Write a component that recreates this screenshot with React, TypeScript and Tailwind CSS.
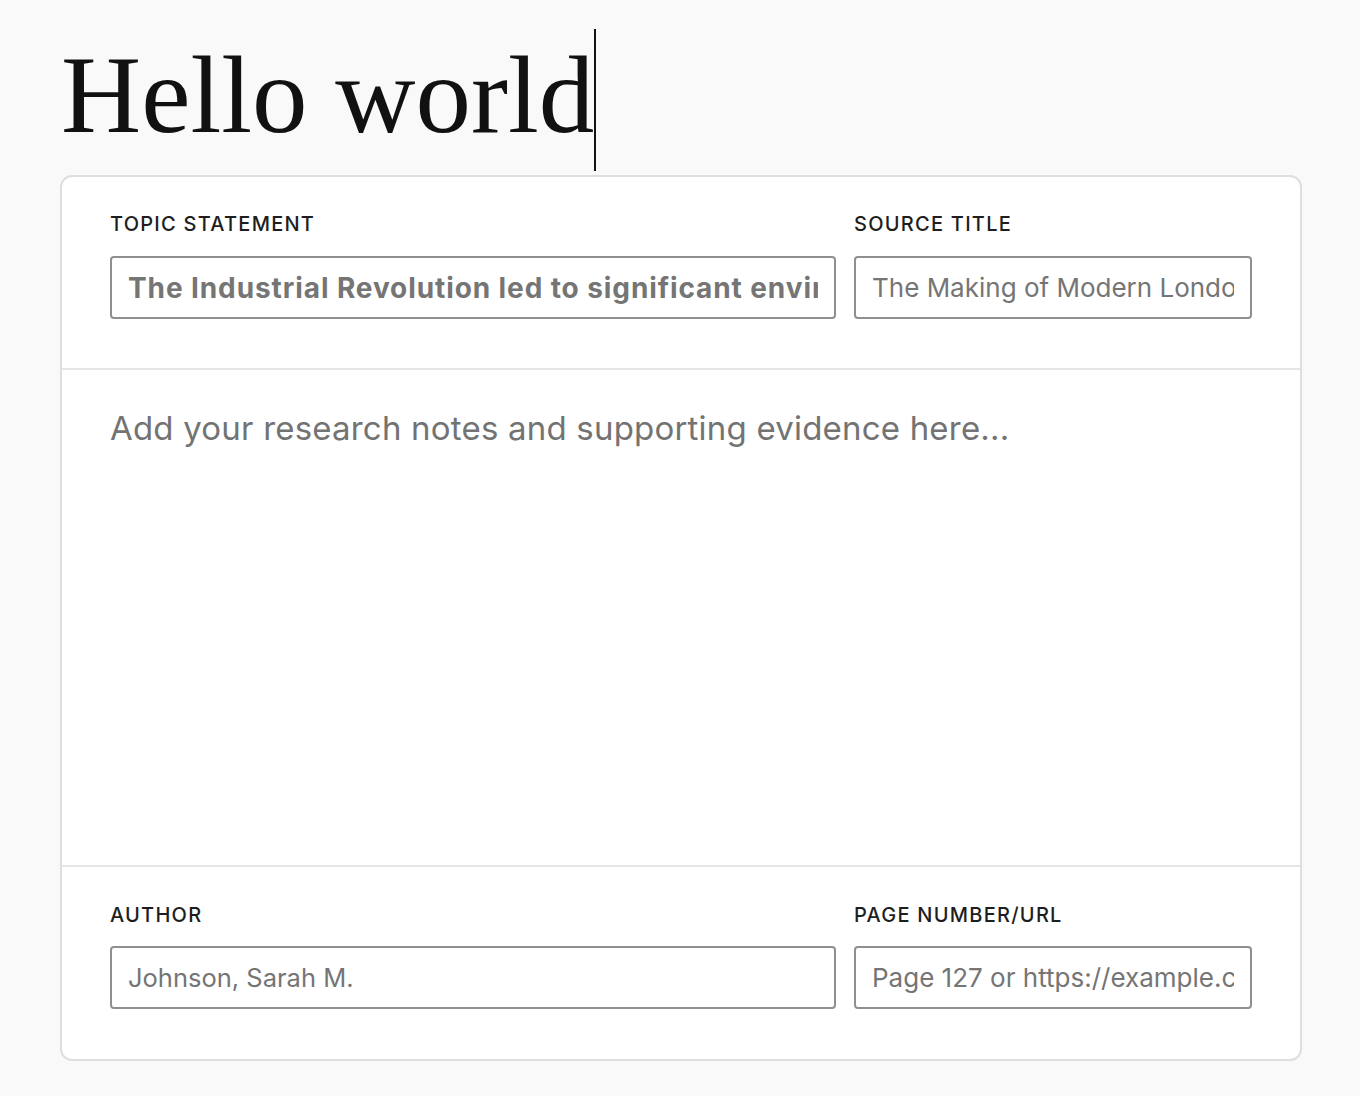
import React from "react";

const inter = { fontFamily: "Inter, 'Noto Sans', sans-serif" } as const;

function Label({ children }: { children: React.ReactNode }) {
  return (
    <div className="text-[20px] leading-[24px] font-medium uppercase tracking-[1.25px] text-[#1e1e1e]">
      {children}
    </div>
  );
}

function Field({ placeholder, variant }: { placeholder: string; variant?: "bold" | "small" }) {
  const size =
    variant === "bold"
      ? "text-[28px] font-bold tracking-[0.9px]"
      : variant === "small"
      ? "text-[25.5px] font-normal"
      : "text-[26px] font-normal";
  return (
    <input
      readOnly
      placeholder={placeholder}
      style={inter}
      className={
        "w-full h-[63px] rounded-[4px] border-[2px] border-[#8f8f8f] bg-white pl-[16px] pr-[16px] outline-none placeholder:text-[#757575] " +
        size
      }
    />
  );
}

export default function App() {
  return (
    <div className="min-h-[1096px] w-full bg-[#f9f9f9]" style={inter}>
      <div className="pl-[60px] pt-[29px]">
        <div
          className="flex items-start h-[142px] text-[#111111] text-[111px]"
          style={{ fontFamily: "'Liberation Serif', 'DejaVu Serif', serif" }}
        >
          <span className="pl-[1px] leading-[131px]">Hello world</span>
          <span className="w-[2px] h-[142px] bg-[#111111]" />
        </div>
        <div className="mt-[4px] w-[1242px] rounded-[12px] border-[2px] border-[#dedede] bg-white overflow-hidden">
          <div className="px-[48px] pt-[35px] pb-[49px] border-b-[2px] border-[#e6e6e6]">
            <div className="grid grid-cols-[726px_398px] gap-x-[18px]">
              <Label>Topic Statement</Label>
              <Label>Source Title</Label>
              <div className="mt-[20px]">
                <Field variant="bold" placeholder="The Industrial Revolution led to significant environmental changes in urban areas" />
              </div>
              <div className="mt-[20px]">
                <Field placeholder="The Making of Modern London" />
              </div>
            </div>
          </div>
          <div className="h-[495px] px-[48px] pt-[34px]">
            <textarea
              readOnly
              placeholder="Add your research notes and supporting evidence here..."
              style={inter}
              className="w-full h-[440px] resize-none text-[33px] tracking-[0.2px] leading-[48px] outline-none bg-transparent placeholder:text-[#737373]"
            />
          </div>
          <div className="px-[48px] pt-[36px] pb-[50px] border-t-[2px] border-[#e6e6e6]">
            <div className="grid grid-cols-[726px_398px] gap-x-[18px]">
              <Label>Author</Label>
              <Label>Page Number/URL</Label>
              <div className="mt-[19px]">
                <Field variant="small" placeholder="Johnson, Sarah M." />
              </div>
              <div className="mt-[19px]">
                <Field placeholder="Page 127 or https://example.com" />
              </div>
            </div>
          </div>
        </div>
      </div>
    </div>
  );
}
